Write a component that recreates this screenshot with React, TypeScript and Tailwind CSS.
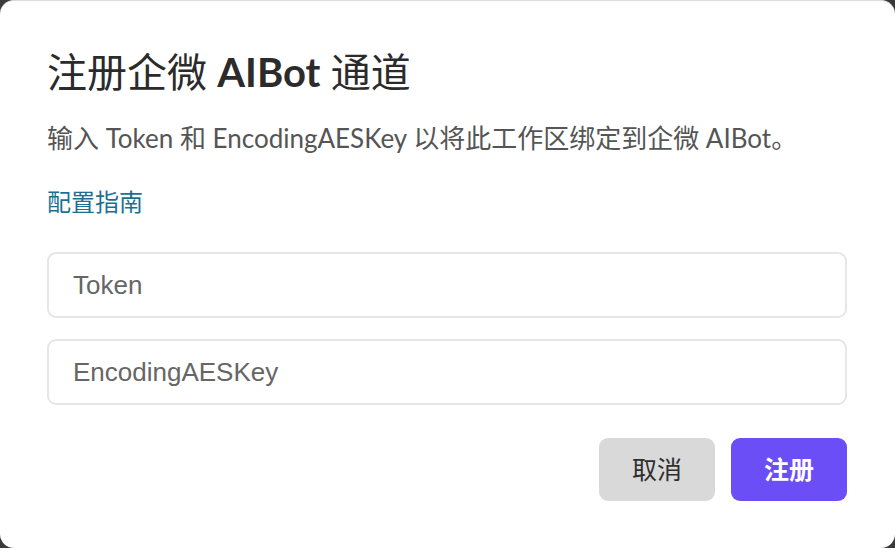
import React from "react";

export default function App() {
  return (
    <div className="w-[895px] h-[548px] bg-[#3a3a3a] overflow-hidden">
      <div
        className="w-full h-full bg-white rounded-[14px] border-t border-[#dcdcdc] pl-[47px] pr-[48px] pt-[47px] flex flex-col"
        style={{ fontFamily: '"Lato", "Noto Sans CJK SC", sans-serif' }}
      >
        <h1 className="text-[40px] leading-[48px] text-[#2b2b2b] font-normal whitespace-nowrap">
          注册企微 <span className="font-bold">AIBot</span> 通道
        </h1>
        <p className="mt-[26px] text-[26px] leading-[32px] text-[#555555] whitespace-nowrap">
          输入 Token 和 EncodingAESKey 以将此工作区绑定到企微 AIBot。
        </p>
        <a className="mt-[32px] text-[24px] leading-[32px] text-[#1d6f91] w-fit cursor-pointer">
          配置指南
        </a>
        <input
          placeholder="Token"
          className="mt-[34px] h-[66px] w-full rounded-[9px] border-2 border-[#e6e6e6] px-[24px] text-[26px] text-[#333] placeholder:text-[#666666] outline-none"
          style={{ fontFamily: '"Liberation Sans", Arial, sans-serif' }}
        />
        <input
          placeholder="EncodingAESKey"
          className="mt-[21px] h-[66px] w-full rounded-[9px] border-2 border-[#e6e6e6] px-[24px] text-[26px] text-[#333] placeholder:text-[#666666] outline-none"
          style={{ fontFamily: '"Liberation Sans", Arial, sans-serif' }}
        />
        <div className="mt-[33px] flex justify-end gap-[16px]">
          <button className="w-[116px] h-[63px] rounded-[9px] bg-[#d9d9d9] text-[25px] text-[#2e2e2e]">
            取消
          </button>
          <button className="w-[116px] h-[63px] rounded-[9px] bg-[#6b4ef6] text-[25px] text-white font-semibold">
            注册
          </button>
        </div>
      </div>
    </div>
  );
}
